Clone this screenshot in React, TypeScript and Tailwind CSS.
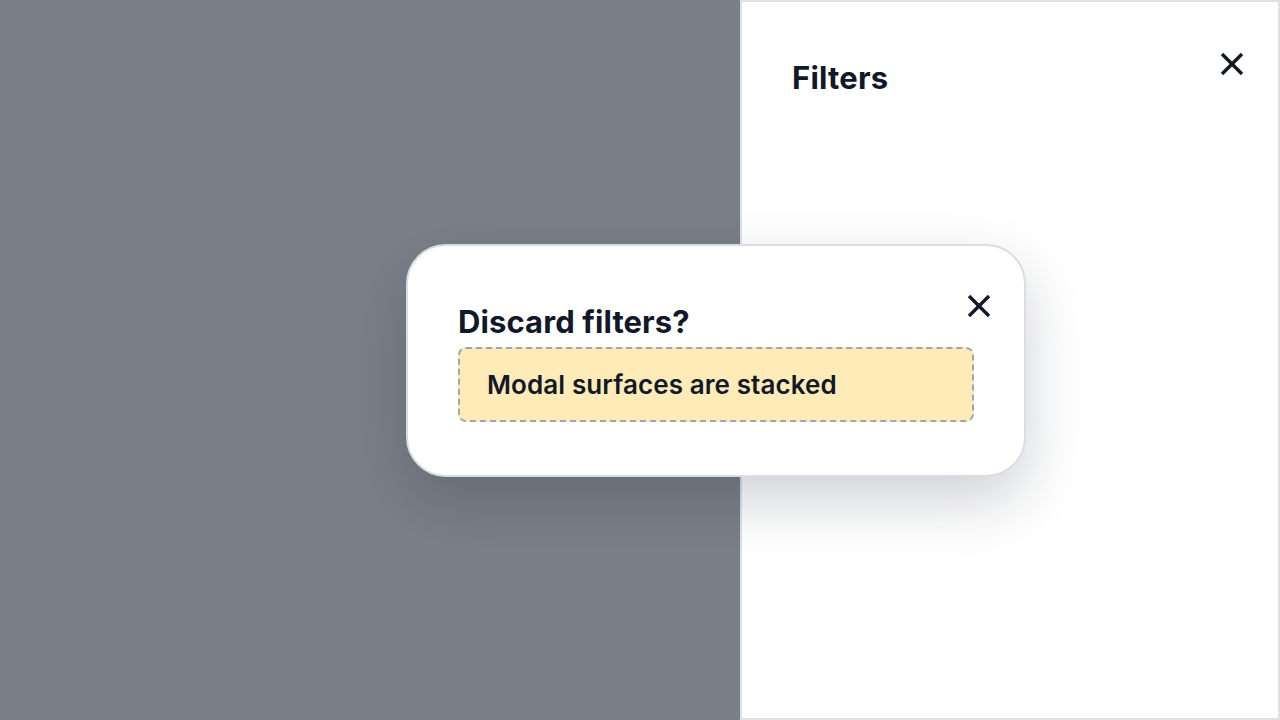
import React from "react";

function XIcon() {
  return (
    <svg width={24} height={24} viewBox="0 0 24 24" fill="none" stroke="#111827" strokeWidth={3.4} strokeLinecap="butt">
      <path d="M2 2 22 22" />
      <path d="M22 2 2 22" />
    </svg>
  );
}

export default function App() {
  return (
    <div
      className="relative w-[1280px] h-[720px] overflow-hidden bg-[#7b7f88] flex justify-end"
      style={{ fontFamily: "Inter, 'Noto Sans', sans-serif" }}
    >
      <aside className="w-[540px] h-full bg-white border-2 border-[#dde1ea] px-[50px] pt-[50px]">
        <div className="flex items-start justify-between">
          <h2 className="text-[31px] leading-[52px] font-bold text-[#111827] tracking-[0.2px]">Filters</h2>
          <button className="mt-0 mr-[-16px] p-0">
            <XIcon />
          </button>
        </div>
      </aside>

      <div className="absolute left-[406px] top-[244px] w-[620px] rounded-[40px] bg-white border-2 border-[#d9dde6] px-[50px] pt-[50px] pb-[53px] shadow-[0_24px_60px_rgba(15,23,42,0.2)]">
        <div className="flex items-start justify-between">
          <h3 className="text-[31px] leading-[40px] pt-[6px] font-bold text-[#111827] tracking-[0.1px]">Discard filters?</h3>
          <button className="mt-[-2px] mr-[-17px] p-0">
            <XIcon />
          </button>
        </div>
        <div className="mt-[5px] h-[75px] rounded-[8px] border-2 border-dashed border-[#9ea5b4] bg-[#feebb7] flex items-center px-[27px]">
          <span className="text-[26px] font-semibold text-[#111827] tracking-[0.1px]">Modal surfaces are stacked</span>
        </div>
      </div>
    </div>
  );
}
